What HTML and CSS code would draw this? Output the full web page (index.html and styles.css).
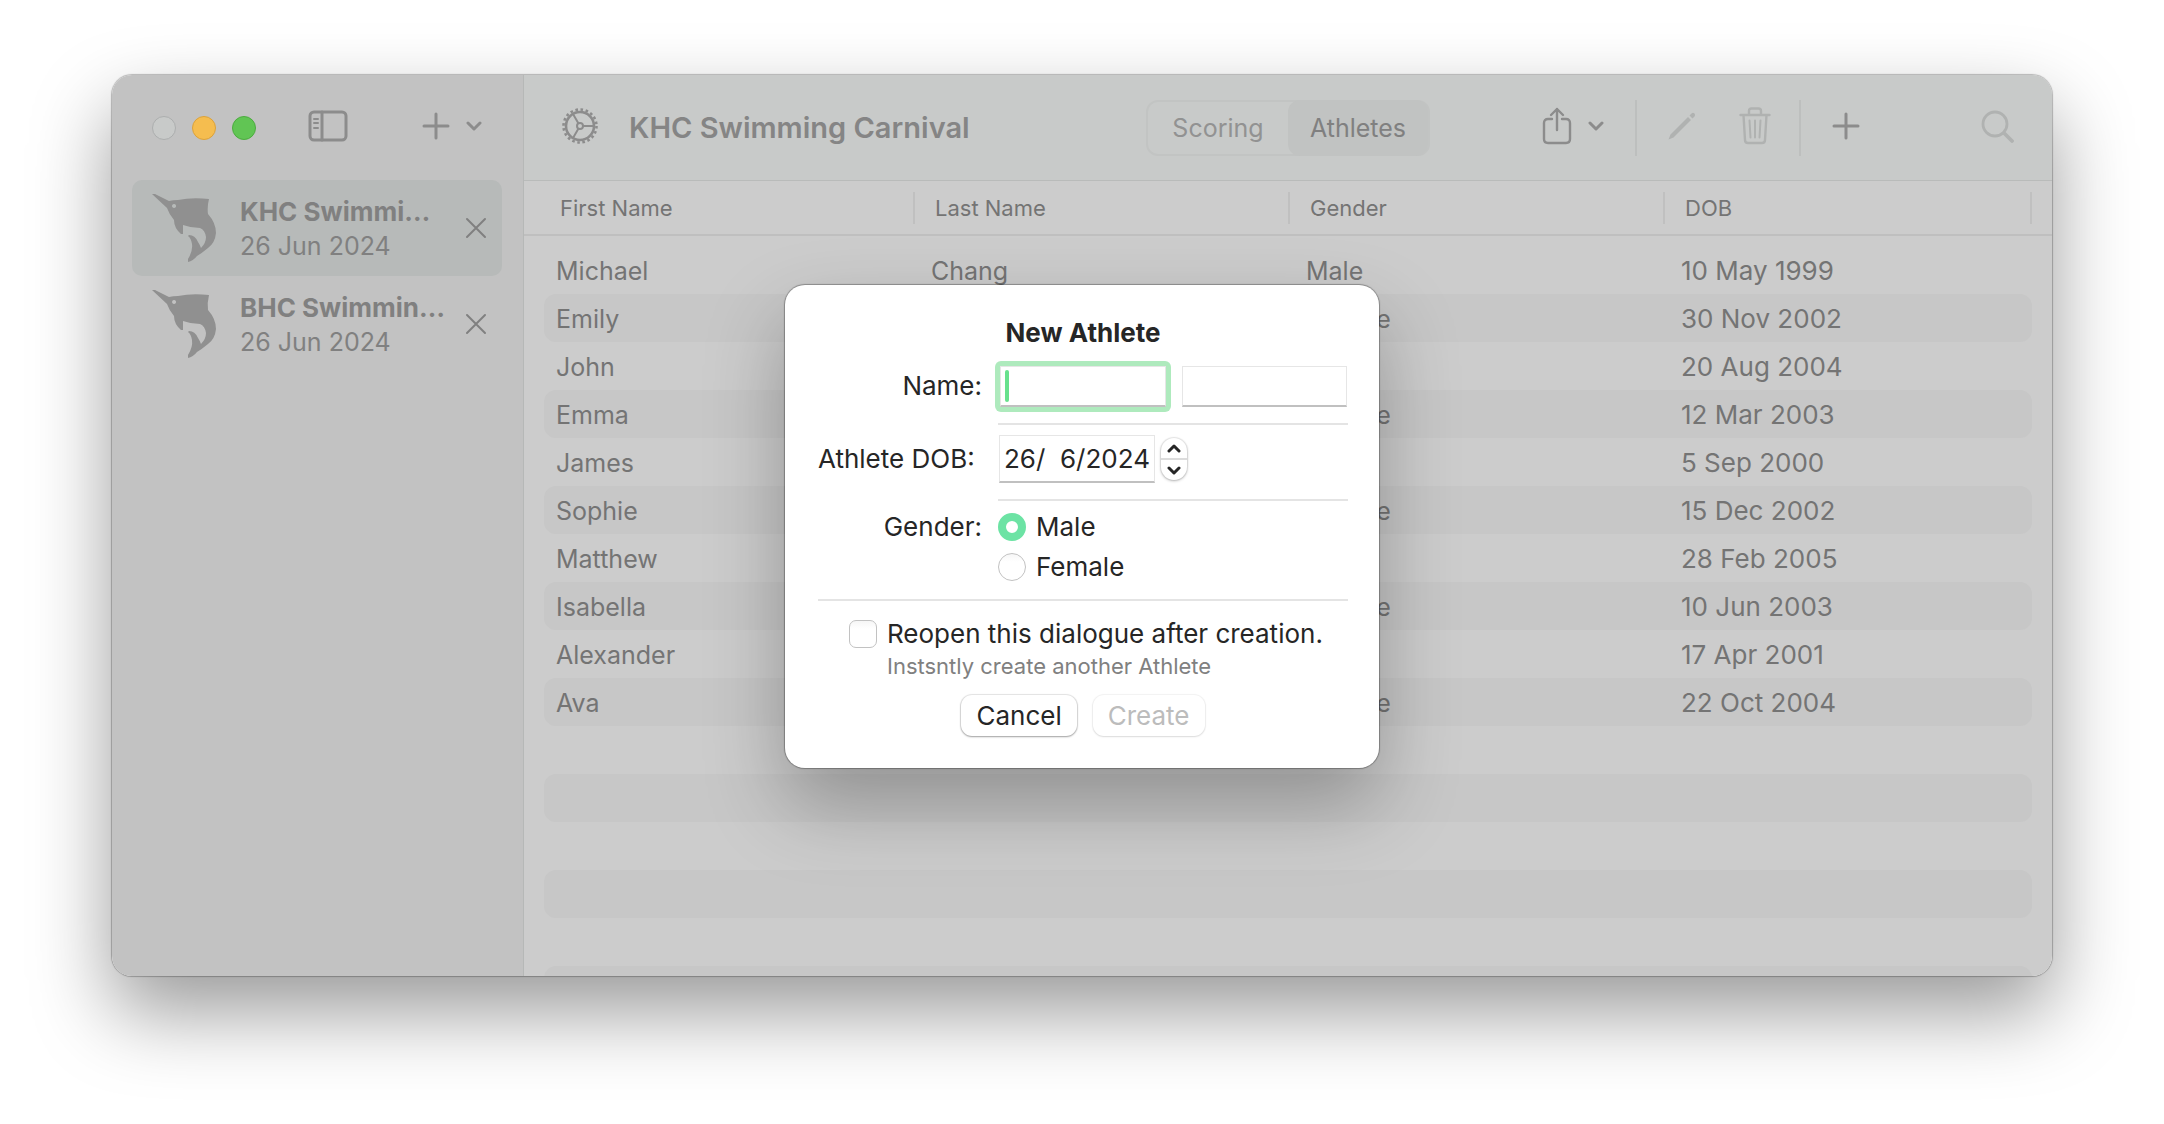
FILE: index.html
```html
<!DOCTYPE html>
<html lang="en">
<head>
<meta charset="utf-8">
<title>KHC Swimming Carnival</title>
<link rel="stylesheet" href="styles.css">
</head>
<body>
<svg class="defs" aria-hidden="true">
  <symbol id="marlin" viewBox="0 0 64 68">
    <path fill-rule="evenodd" d="M0 0 L3 0 L17 7 Q21 6 26 6 Q40 3 57 5 Q55 13 56 20 Q64 29 64 39 Q63 49 56 54 Q50 59 45 62 Q41 67 36 68 L36 65 Q41 57 40 50 Q39 44 36 42 L37 41 Q43 41 46 48 Q48 51 49 54 Q54 49 54 43 Q53 36 48 34 Q39 34 31 31 L31 40 L29 40 Q22 34 22 26 Q17 20 15 14 Z M22 10 a2 2 0 1 0 .1 0 Z"/>
  </symbol>
  <symbol id="chevron" viewBox="0 0 16 10">
    <path d="M2 2 L8 8 L14 2" fill="none" stroke="currentColor" stroke-width="3" stroke-linecap="round" stroke-linejoin="round"/>
  </symbol>
  <symbol id="plus" viewBox="0 0 28 28">
    <path d="M14 2 V26 M2 14 H26" fill="none" stroke="currentColor" stroke-width="3" stroke-linecap="round"/>
  </symbol>
  <symbol id="cross" viewBox="0 0 22 22">
    <path d="M2 2 L20 20 M20 2 L2 20" fill="none" stroke="currentColor" stroke-width="2" stroke-linecap="round"/>
  </symbol>
</svg>

<div class="window">
  <aside class="sidebar">
    <header class="sidebar-bar">
      <div class="lights">
        <button class="light light-close" aria-label="Close window"></button>
        <button class="light light-min" aria-label="Minimise"></button>
        <button class="light light-zoom" aria-label="Zoom"></button>
      </div>
      <button class="icon-button" aria-label="Toggle sidebar">
        <svg width="40" height="32" viewBox="0 0 40 32" fill="none" stroke="currentColor" stroke-width="3" stroke-linecap="round"><rect x="2" y="2" width="36" height="28" rx="4"/><path d="M14 2 V30"/><path d="M6 9 H10 M6 13 H10 M6 18 H10" stroke-width="2"/></svg>
      </button>
      <button class="icon-button add-menu" aria-label="Add carnival">
        <svg width="28" height="28"><use href="#plus"/></svg>
        <svg width="16" height="10"><use href="#chevron"/></svg>
      </button>
    </header>
    <ul class="carnivals">
      <li class="carnival selected">
        <svg class="fish" width="64" height="68"><use href="#marlin"/></svg>
        <a class="carnival-link" href="#khc"><strong>KHC Swimmi…</strong><span>26 Jun 2024</span></a>
        <button class="icon-button" aria-label="Remove KHC"><svg width="22" height="22"><use href="#cross"/></svg></button>
      </li>
      <li class="carnival">
        <svg class="fish" width="64" height="68"><use href="#marlin"/></svg>
        <a class="carnival-link" href="#bhc"><strong>BHC Swimmin…</strong><span>26 Jun 2024</span></a>
        <button class="icon-button" aria-label="Remove BHC"><svg width="22" height="22"><use href="#cross"/></svg></button>
      </li>
    </ul>
  </aside>

  <main class="content">
    <header class="toolbar">
      <button class="icon-button" aria-label="Settings">
        <svg width="36" height="36" viewBox="0 0 36 36" fill="none" stroke="currentColor"><circle cx="18" cy="18" r="14" stroke-width="2.600"/><circle cx="18" cy="18" r="16.500" stroke-width="2.600" stroke-dasharray="2.600 2.584"/><circle cx="18" cy="18" r="3" stroke-width="2"/><path d="M21 18 H32 M16.500 15.400 L11 6 M16.500 20.600 L11 30" stroke-width="2"/></svg>
      </button>
      <h1>KHC Swimming Carnival</h1>
      <div class="segments">
        <button>Scoring</button>
        <button class="active">Athletes</button>
      </div>
      <button class="icon-button share" aria-label="Share">
        <svg width="30" height="38" viewBox="0 0 30 38" fill="none" stroke="currentColor" stroke-width="2.400" stroke-linecap="round" stroke-linejoin="round"><path d="M10 12 H6 Q2 12 2 16 V32 Q2 36 6 36 H24 Q28 36 28 32 V16 Q28 12 24 12 H20 M15 23 V2 M9 8 L15 2 L21 8"/></svg>
        <svg width="16" height="10"><use href="#chevron"/></svg>
      </button>
      <span class="rule"></span>
      <button class="icon-button faint" aria-label="Edit" disabled>
        <svg width="28" height="28" viewBox="0 0 28 28" fill="currentColor"><path d="M.5 27.500 L2.500 22.500 L20 5 L23 8 L5.500 25.500 Z M21.500 3.500 L23.500 1.500 Q25 .2 26.500 1.500 Q27.800 3 26.500 4.500 L24.500 6.500 Z"/></svg>
      </button>
      <button class="icon-button faint trash" aria-label="Delete" disabled>
        <svg width="32" height="38" viewBox="0 0 32 38" fill="none" stroke="currentColor" stroke-width="2.400" stroke-linecap="round" stroke-linejoin="round"><path d="M1.500 8 H30.500 M10 8 V4 Q10 1.500 12.500 1.500 H19.500 Q22 1.500 22 4 V8 M4.500 8 L6 33 Q6 36 9 36 H23 Q26 36 26 33 L27.500 8"/><path d="M10.500 13.500 L11.500 30.500 M16 13.500 V30.500 M21.500 13.500 L20.500 30.500" stroke-width="2"/></svg>
      </button>
      <span class="rule rule-add"></span>
      <button class="icon-button" aria-label="New athlete"><svg width="28" height="28"><use href="#plus"/></svg></button>
      <button class="icon-button faint search" aria-label="Search">
        <svg width="33" height="33" viewBox="0 0 33 33" fill="none" stroke="currentColor" stroke-linecap="round"><circle cx="14" cy="14" r="12" stroke-width="2.800"/><path d="M23 23 L31 31" stroke-width="3.800"/></svg>
      </button>
    </header>

    <section class="roster">
      <table>
        <colgroup><col class="col-first"><col class="col"><col class="col"><col></colgroup>
        <thead><tr><th>First Name</th><th>Last Name</th><th>Gender</th><th>DOB</th></tr></thead>
        <tbody>
          <tr><td>Michael</td><td>Chang</td><td>Male</td><td>10 May 1999</td></tr>
          <tr><td>Emily</td><td></td><td>Female</td><td>30 Nov 2002</td></tr>
          <tr><td>John</td><td></td><td>Male</td><td>20 Aug 2004</td></tr>
          <tr><td>Emma</td><td></td><td>Female</td><td>12 Mar 2003</td></tr>
          <tr><td>James</td><td></td><td>Male</td><td>5 Sep 2000</td></tr>
          <tr><td>Sophie</td><td></td><td>Female</td><td>15 Dec 2002</td></tr>
          <tr><td>Matthew</td><td></td><td>Male</td><td>28 Feb 2005</td></tr>
          <tr><td>Isabella</td><td></td><td>Female</td><td>10 Jun 2003</td></tr>
          <tr><td>Alexander</td><td></td><td>Male</td><td>17 Apr 2001</td></tr>
          <tr><td>Ava</td><td></td><td>Female</td><td>22 Oct 2004</td></tr>
          <tr><td></td><td></td><td></td><td></td></tr>
          <tr><td></td><td></td><td></td><td></td></tr>
          <tr><td></td><td></td><td></td><td></td></tr>
          <tr><td></td><td></td><td></td><td></td></tr>
          <tr><td></td><td></td><td></td><td></td></tr>
          <tr><td></td><td></td><td></td><td></td></tr>
        </tbody>
      </table>
    </section>
  </main>

  <form class="sheet" role="dialog" aria-labelledby="sheet-title">
    <h2 id="sheet-title">New Athlete</h2>
    <div class="fields">
      <label for="first">Name:</label>
      <div class="names">
        <span class="focused"><input id="first" type="text"><span class="caret"></span></span>
        <input type="text" aria-label="Last name">
      </div>
      <hr>
      <label class="dob-label" for="dob">Athlete DOB:</label>
      <div class="dob">
        <input id="dob" type="text" value="26/  6/2024">
        <span class="stepper">
          <button type="button" aria-label="Later"><svg width="14" height="9" viewBox="0 0 14 9"><path d="M2 7 L7 2 L12 7"/></svg></button>
          <button type="button" aria-label="Earlier"><svg width="14" height="9" viewBox="0 0 14 9"><path d="M2 2 L7 7 L12 2"/></svg></button>
        </span>
      </div>
      <hr>
      <span class="gender-label" id="gender">Gender:</span>
      <div class="genders" role="radiogroup" aria-labelledby="gender">
        <label><input type="radio" name="gender" checked>Male</label>
        <label><input type="radio" name="gender">Female</label>
      </div>
    </div>
    <hr>
    <div class="reopen">
      <input type="checkbox" id="reopen">
      <label for="reopen">Reopen this dialogue after creation.</label>
      <small>Instsntly create another Athlete</small>
    </div>
    <div class="actions">
      <button type="button">Cancel</button>
      <button type="submit" disabled>Create</button>
    </div>
  </form>
</div>
</body>
</html>
```

FILE: styles.css
```css
* { box-sizing: border-box; }

body {
  margin: 0;
  height: 100vh;
  display: flex;
  padding: 75px 112px 148px;
  background: #fff;
  font-family: Inter, "Liberation Sans", sans-serif;
  font-size: 25px;
  line-height: 34px;
  color: #747474;
  overflow: hidden;
}

.defs { position: absolute; width: 0; height: 0; }

button, input { font: inherit; color: inherit; margin: 0; }
svg { display: block; flex: none; }

.window {
  position: relative;
  flex: 1;
  min-width: 0;
  display: flex;
  border-radius: 20px;
  box-shadow: 0 0 1px 1px rgba(0, 0, 0, .25), 0 36px 80px rgba(0, 0, 0, .4);
}

.icon-button {
  display: flex;
  align-items: center;
  padding: 0;
  border: 0;
  background: none;
  color: #8c8c8c;
}
.icon-button.faint { color: #b0b2b1; }
.toolbar .icon-button, .sidebar-bar .icon-button { padding-bottom: 3px; }

/* Sidebar */
.sidebar {
  width: 412px;
  flex: none;
  padding: 0 21px 0 20px;
  background: #c2c2c2;
  border-right: 1px solid #b6b8b7;
  border-radius: 20px 0 0 20px;
}
.sidebar-bar {
  display: flex;
  align-items: center;
  height: 105px;
  padding: 0 20px;
}
.lights { display: flex; gap: 16px; margin-right: 52px; }
.light {
  width: 24px;
  height: 24px;
  padding: 0;
  border-radius: 50%;
  border: 1px solid #acaeae;
  background: #c8cac9;
}
.light-min { background: #f5bd4f; border-color: #dba23b; }
.light-zoom { background: #61c554; border-color: #4cac3f; }
.add-menu { margin-left: auto; gap: 16px; }

.carnivals { list-style: none; margin: 0; padding: 0; }
.carnival {
  display: flex;
  align-items: center;
  height: 96px;
  padding: 0 15px 0 20px;
  border-radius: 10px;
}
.carnival.selected { background: #b7bab9; }
.carnival .icon-button { color: #808080; margin-left: auto; }
.fish { fill: #909090; }
.carnival-link {
  padding-top: 2px;
  margin-left: 24px;
  color: #808080;
  text-decoration: none;
  white-space: nowrap;
}
.carnival-link strong, .carnival-link span { display: block; }
.carnival-link strong { font-size: 26px; }

/* Toolbar */
.content {
  flex: 1;
  min-width: 0;
  display: flex;
  flex-direction: column;
  background: #ccc;
  border-radius: 0 20px 20px 0;
  overflow: hidden;
}
.toolbar {
  flex: none;
  display: flex;
  align-items: center;
  height: 106px;
  padding: 0 38px;
  background: #c8cac9;
  border-bottom: 1px solid #b9bbba;
}
.toolbar h1 {
  margin: 0 auto 0 31px;
  font-size: 29px;
  font-weight: 600;
  color: #858585;
  white-space: nowrap;
}
.segments {
  display: flex;
  height: 56px;
  border: 2px solid #c2c4c3;
  border-radius: 12px;
}
.segments button {
  width: 140px;
  margin: -2px 0;
  padding: 0;
  border: 0;
  background: none;
  border-radius: 12px;
  color: #929292;
}
.segments .active { background: #c1c3c2; color: #808080; }
.share { gap: 16px; margin-left: 112px; }
.rule { width: 2px; height: 56px; margin: 0 31px; background: #bdbfbe; }
.rule-add { margin-left: 28px; }
.trash { margin-left: 43px; }
.search { margin-left: 121px; }

/* Athlete table */
.roster {
  flex: 1;
  min-height: 0;
  padding: 0 20px;
  background: linear-gradient(#bfbfbf, #bfbfbf) 0 53px / 100% 2px no-repeat;
}
table { width: 100%; table-layout: fixed; border-collapse: separate; border-spacing: 0; }
.col-first { width: 371px; }
.col { width: 375px; }
th {
  height: 53px;
  padding: 0 20px;
  font-size: 22px;
  font-weight: 400;
  text-align: left;
  background: linear-gradient(#c0c0c0, #c0c0c0) right center / 2px 32px no-repeat;
}
th:first-child { padding-left: 16px; }
tbody::before { content: ""; display: block; height: 12px; }
td { height: 48px; padding: 2px 16px 0; }
td:first-child { padding-left: 12px; border-radius: 12px 0 0 12px; }
td:last-child { border-radius: 0 12px 12px 0; font-size: 26px; }
tbody tr:nth-child(even) td { background: #c7c7c7; }

/* New athlete sheet */
.sheet {
  position: absolute;
  top: 210px;
  left: 50%;
  transform: translateX(-50%);
  width: 594px;
  padding: 31px 31px 32px 33px;
  border-radius: 20px;
  background: #fff;
  color: #262626;
  font-size: 26px;
  box-shadow: 0 0 1px 1px rgba(0, 0, 0, .3), 0 36px 80px rgba(0, 0, 0, .28);
}
.sheet h2 {
  margin: 0;
  font-size: 26px;
  font-weight: 700;
  text-align: center;
}
.sheet hr { margin: 0; height: 2px; border: 0; background: #e4e4e4; }
.fields {
  display: grid;
  grid-template-columns: 164px 1fr;
  column-gap: 16px;
}
.fields > hr { grid-column: 2; }
.fields > label, .gender-label { text-align: right; white-space: nowrap; }
.fields > label { padding-top: 19px; }
.fields > .dob-label { padding: 17px 8px 0 0; }
.gender-label { padding-top: 9px; }
.names { display: grid; grid-template-columns: 1fr 1fr; gap: 16px; padding: 16px 1px 16px 2px; }
.sheet input[type="text"] {
  width: 100%;
  height: 41px;
  padding: 0 4px;
  border: 1px solid #e6e6e6;
  border-bottom: 2px solid #c0c0c0;
  background: #fff;
  outline: 0;
}
.focused {
  position: relative;
  border-radius: 2px;
  box-shadow: 0 0 0 5px #aeeabd;
}
.caret {
  position: absolute;
  left: 5px;
  top: 4px;
  width: 4px;
  height: 32px;
  border-radius: 2px;
  background: #68e18d;
}
.focused input { display: block; }
.dob { display: flex; align-items: center; gap: 6px; padding: 10px 0 16px 1px; }
.sheet .dob input { width: 156px; height: 48px; white-space: pre; }
.stepper {
  display: flex;
  flex-direction: column;
  width: 26px;
  height: 42px;
  border-radius: 13px;
  box-shadow: 0 0 1px 1px rgba(0, 0, 0, .08), 0 1px 3px rgba(0, 0, 0, .25);
}
.stepper button {
  flex: 1;
  display: flex;
  align-items: center;
  justify-content: center;
  padding: 0;
  border: 0;
  background: none;
}
.stepper button + button { border-top: 2px solid #dcdcdc; }
.stepper path { fill: none; stroke: #262626; stroke-width: 3; stroke-linecap: round; stroke-linejoin: round; }

.genders { padding: 6px 0 12px; }
.genders label { display: flex; align-items: center; gap: 10px; height: 40px; }
.sheet input[type="radio"], .sheet input[type="checkbox"] {
  appearance: none;
  width: 28px;
  height: 28px;
  border: 1px solid #c2c2c2;
  border-radius: 50%;
  background: linear-gradient(#f6f6f6, #fff 30%);
}
.sheet input[type="checkbox"] { border-radius: 7px; }
.sheet input[type="radio"]:checked { border: 8px solid #6ce3a4; background: #fff; }

.reopen {
  display: grid;
  grid-template-columns: 28px 1fr;
  column-gap: 10px;
  align-items: center;
  padding: 16px 0 0 31px;
  white-space: nowrap;
}
.reopen small { grid-column: 2; font-size: 22px; line-height: 30px; color: #808080; }
.actions { display: flex; justify-content: center; gap: 16px; padding-top: 14px; }
.actions button {
  height: 41px;
  padding: 0 15px;
  border: 0;
  border-radius: 11px;
  background: #fff;
  line-height: 41px;
  box-shadow: 0 0 1px 1px rgba(0, 0, 0, .1), 0 1px 2px rgba(0, 0, 0, .3);
}
.actions button:disabled { color: #bcbcbc; box-shadow: 0 0 1px 1px rgba(0, 0, 0, .05), 0 1px 2px rgba(0, 0, 0, .1); }
```
